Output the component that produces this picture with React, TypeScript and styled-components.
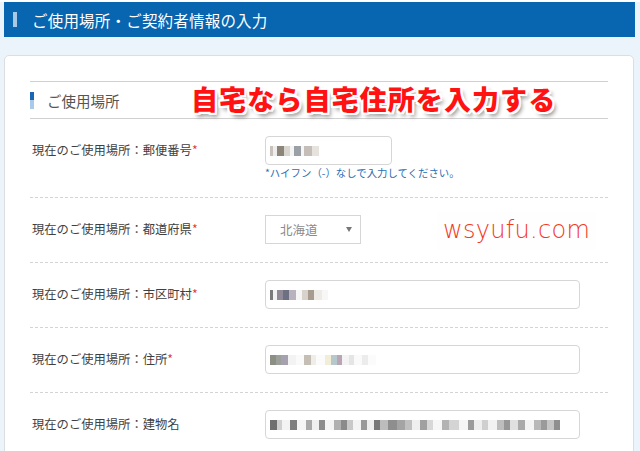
import React from "react";
import styled, { createGlobalStyle } from "styled-components";

const GlobalStyle = createGlobalStyle`
  html, body {
    margin: 0;
    padding: 0;
    background: #eaf4fa;
  }
  body {
    font-family: "Noto Sans CJK JP", "Noto Sans", sans-serif;
  }
`;

const Page = styled.div`
  width: 640px;
  height: 451px;
  overflow: hidden;
  background: #eaf4fa;
  border-top: 2px solid #ffffff;
  box-sizing: border-box;
`;

const HeaderBar = styled.div`
  margin: 0 5px 0 4px;
  height: 35px;
  background: #0865b0;
  display: flex;
  align-items: center;
  padding-left: 9px;
  gap: 15px;
`;

const HeaderMark = styled.span`
  width: 4px;
  height: 15px;
  background: #a8c9e6;
`;

const HeaderTitle = styled.h1`
  margin: 0;
  color: #ffffff;
  font-size: 15.5px;
  font-weight: 400;
  letter-spacing: 0.2px;
`;

const Card = styled.div`
  position: relative;
  margin: 18px 6px 0 4px;
  background: #ffffff;
  border: 1px solid #dcdfe2;
  border-radius: 5px;
  padding: 25px 25px 0 25px;
  height: 420px;
`;

const SectionHead = styled.div`
  height: 36px;
  border-top: 1px solid #d0d0d0;
  border-bottom: 1px solid #d0d0d0;
  display: flex;
  align-items: center;
  gap: 13px;
`;

const SectionMark = styled.span`
  width: 4px;
  height: 17px;
  background: linear-gradient(#1767b4 0 50%, #a9cbe8 50% 100%);
`;

const SectionTitle = styled.h2`
  margin: 0;
  font-size: 14.5px;
  font-weight: 400;
  color: #555;
`;

const Row = styled.div`
  display: grid;
  grid-template-columns: 235px 1fr;
  padding: 17px 0 18px;
  border-bottom: 1px dashed #d4d4d4;
`;

const Label = styled.div`
  height: 29px;
  line-height: 29px;
  padding-left: 2px;
  font-size: 12.3px;
  color: #3f3f3f;
  white-space: nowrap;
`;

const Required = styled.span`
  color: #e0362c;
`;

const Field = styled.div<{ $width: number; $round?: boolean }>`
  width: ${p => p.$width}px;
  height: 29px;
  box-sizing: border-box;
  border: 1px solid #d6d6d6;
  border-radius: ${p => (p.$round === false ? 0 : 4)}px;
  display: flex;
  align-items: center;
  padding-left: 4px;
  overflow: hidden;
`;

const Hint = styled.div`
  margin-top: 1px;
  font-size: 10.4px;
  line-height: 13px;
  color: #2a6db2;
  white-space: nowrap;
`;

const SelectBox = styled(Field)`
  justify-content: space-between;
  padding: 0 8px 0 14px;
  font-size: 12.5px;
  color: #8a8a8a;
`;

const Caret = styled.span`
  width: 0;
  height: 0;
  border-left: 3.5px solid transparent;
  border-right: 3.5px solid transparent;
  border-top: 5px solid #777;
`;

const Mosaic = styled.div`
  display: flex;
  align-items: center;
  height: 10px;
  filter: blur(0.6px);
`;

const Pixel = styled.span<{ $w: number; $c: string }>`
  flex: none;
  width: ${p => p.$w}px;
  height: 10px;
  background: ${p => p.$c};
`;

const Callout = styled.div`
  position: absolute;
  left: 186px;
  top: 23px;
  font-size: 27px;
  font-weight: 900;
  letter-spacing: 1.1px;
  color: #ff1212;
  white-space: nowrap;
  text-shadow:
    -2px -2px 0 #fff, 2px -2px 0 #fff, -2px 2px 0 #fff, 2px 2px 0 #fff,
    0 -2px 0 #fff, 0 2px 0 #fff, -2px 0 0 #fff, 2px 0 0 #fff,
    3px 4px 4px rgba(0, 0, 0, 0.45);
`;

const Watermark = styled.div`
  position: absolute;
  left: 432px;
  top: 156px;
  padding: 4px 6px 6px;
  background: #fefefe;
  font-family: "DejaVu Sans", sans-serif;
  font-weight: 200;
  font-size: 24px;
  color: #f23a1c;
  letter-spacing: 0.3px;
`;

type Px = [number, string];

const blur = (spec: string): Px[] =>
  spec.split(" ").map(s => {
    const [w, c] = s.split(":");
    return [Number(w), c];
  });

const mosaics: Record<string, Px[]> = {
  zip: blur("3:#c9c2bb 4:#eee 7:#8d8579 6:#d9d5cf 4:#f4f4f4 7:#9aa0a6 3:#f6f6f6 8:#c5bdb8 7:#e6e2de"),
  city: blur("3:#7a7a7a 4:#f2f2f2 6:#8f8a96 6:#6d6f82 7:#b8b2bf 6:#f5f5f5 6:#d8d2cc 6:#a89c8f 8:#eeeae6 6:#f7f7f7"),
  addr: blur("6:#8b8f84 5:#9ba09a 7:#a7a0ae 8:#f3f3f3 8:#fafafa 7:#c4beb5 5:#f0ede8 9:#fbfbfb 6:#f2edd7 6:#b7c8cc 5:#b9a5b3 7:#f4f4f4 5:#e5e5e5 8:#fafafa 6:#ececec 8:#fbfbfb"),
  bldg: blur("7:#6f6f6f 5:#cfcfcf 8:#f3f3f3 7:#7f7f7f 9:#f5f5f5 6:#a9a9a9 7:#f0f0f0 6:#8c8c8c 9:#f4f4f4 7:#b0b0b0 6:#8a8a8a 6:#c8c8c8 8:#f3f3f3 6:#999 7:#eeeeee 6:#777 8:#bcbcbc 9:#8e8e8e 8:#a4a4a4 7:#c0c0c0 8:#efefef 7:#a0a0a0 6:#d7d7d7 9:#f6f6f6 7:#b3b3b3 10:#d4d4d4 9:#f5f5f5 6:#9b9b9b 8:#eeeeee 6:#cfcfcf 9:#f2f2f2 7:#bdbdbd 6:#969696 8:#e0e0e0 7:#aaaaaa 9:#f4f4f4 7:#b8b8b8 6:#9a9a9a 7:#c6c6c6 6:#8f8f8f"),
};

const Blurred: React.FC<{ name: string }> = ({ name }) => (
  <Mosaic>
    {mosaics[name].map(([w, c], i) => (
      <Pixel key={i} $w={w} $c={c} />
    ))}
  </Mosaic>
);

const fields = [
  { label: "市区町村", required: true, mosaic: "city" },
  { label: "住所", required: true, mosaic: "addr" },
  { label: "建物名", required: false, mosaic: "bldg" },
];

const App: React.FC = () => (
  <Page>
    <GlobalStyle />
    <HeaderBar>
      <HeaderMark />
      <HeaderTitle>ご使用場所・ご契約者情報の入力</HeaderTitle>
    </HeaderBar>
    <Card>
      <SectionHead>
        <SectionMark />
        <SectionTitle>ご使用場所</SectionTitle>
      </SectionHead>

      <Row>
        <Label>
          現在のご使用場所：郵便番号<Required>*</Required>
        </Label>
        <div>
          <Field $width={127}>
            <Blurred name="zip" />
          </Field>
          <Hint>*ハイフン（-）なしで入力してください。</Hint>
        </div>
      </Row>

      <Row>
        <Label>
          現在のご使用場所：都道府県<Required>*</Required>
        </Label>
        <SelectBox $width={96} $round={false}>
          北海道
          <Caret />
        </SelectBox>
      </Row>

      {fields.map(f => (
        <Row key={f.label}>
          <Label>
            現在のご使用場所：{f.label}
            {f.required && <Required>*</Required>}
          </Label>
          <Field $width={315}>
            <Blurred name={f.mosaic} />
          </Field>
        </Row>
      ))}

      <Callout>自宅なら自宅住所を入力する</Callout>
      <Watermark>wsyufu.com</Watermark>
    </Card>
  </Page>
);

export default App;
